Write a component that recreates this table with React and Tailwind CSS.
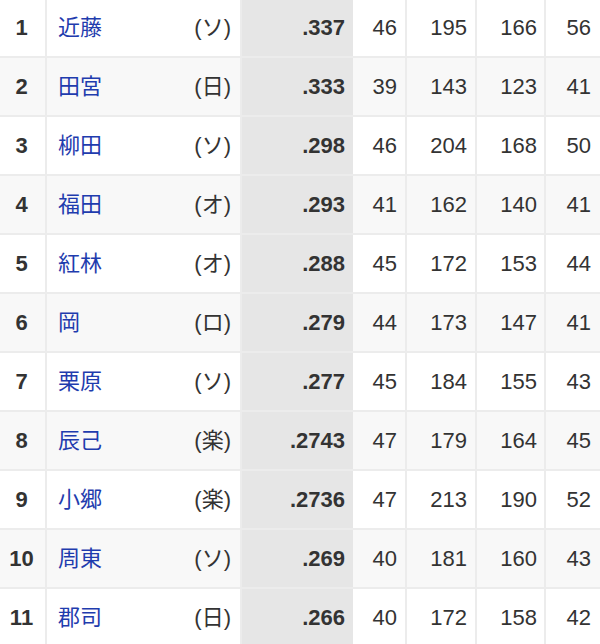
const rows = [
  ["1", "近藤", "ソ", ".337", "46", "195", "166", "56"],
  ["2", "田宮", "日", ".333", "39", "143", "123", "41"],
  ["3", "柳田", "ソ", ".298", "46", "204", "168", "50"],
  ["4", "福田", "オ", ".293", "41", "162", "140", "41"],
  ["5", "紅林", "オ", ".288", "45", "172", "153", "44"],
  ["6", "岡", "ロ", ".279", "44", "173", "147", "41"],
  ["7", "栗原", "ソ", ".277", "45", "184", "155", "43"],
  ["8", "辰己", "楽", ".2743", "47", "179", "164", "45"],
  ["9", "小郷", "楽", ".2736", "47", "213", "190", "52"],
  ["10", "周東", "ソ", ".269", "40", "181", "160", "43"],
  ["11", "郡司", "日", ".266", "40", "172", "158", "42"],
]

function Row({ r, i }) {
  const bg = i % 2 === 0 ? "bg-white" : "bg-[#f8f8f8]"
  return (
    <div className={`grid grid-cols-[47px_195px_111px_54px_70px_69px_1fr] h-[59px] border-b-2 border-[#ececec] ${bg}`}>
      <div className="flex items-center justify-center pr-[2px] border-r-2 border-[#ececec] font-bold text-[#333]">
        {r[0]}
      </div>
      <div className="flex items-center justify-between pl-[11px] pr-[9px] border-r-2 border-[#ececec]">
        <span className="text-[#1f3cae]">{r[1]}</span>
        <span className="text-[#333]">({r[2]})</span>
      </div>
      <div className="flex items-center justify-end pr-[8px] bg-[#e6e6e6] font-bold text-[#333]">
        {r[3]}
      </div>
      <div className="flex items-center justify-end pr-[8px] border-r-2 border-[#ececec] text-[#333]">
        {r[4]}
      </div>
      <div className="flex items-center justify-end pr-[8px] border-r-2 border-[#ececec] text-[#333]">
        {r[5]}
      </div>
      <div className="flex items-center justify-end pr-[7px] border-r-2 border-[#ececec] text-[#333]">
        {r[6]}
      </div>
      <div className="flex items-center justify-end pr-[9px] text-[#333]">
        {r[7]}
      </div>
    </div>
  )
}

export default function App() {
  return (
    <div className="w-[600px] h-[644px] overflow-hidden bg-white text-[22px] font-['Liberation_Sans','Noto_Sans_CJK_JP',sans-serif]">
      <div className="-mt-px">
        {rows.map((r, i) => (
          <Row key={r[0]} r={r} i={i} />
        ))}
      </div>
    </div>
  )
}
